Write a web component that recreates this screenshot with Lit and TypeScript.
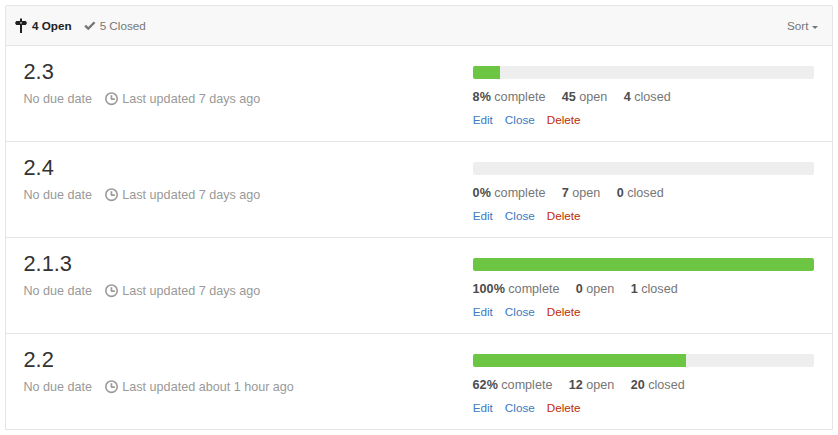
import { LitElement, html, css, svg } from "lit";
import { customElement } from "lit/decorators.js";

interface Milestone { title: string; updated: string; percent: number; open: number; closed: number }

const milestones: Milestone[] = [
  { title: "2.3", updated: "7 days ago", percent: 8, open: 45, closed: 4 },
  { title: "2.4", updated: "7 days ago", percent: 0, open: 7, closed: 0 },
  { title: "2.1.3", updated: "7 days ago", percent: 100, open: 0, closed: 1 },
  { title: "2.2", updated: "about 1 hour ago", percent: 62, open: 12, closed: 20 },
];

const BAR_WIDTH = 341;
const filled = (m: Milestone) => Math.floor((BAR_WIDTH * m.closed) / (m.open + m.closed));

const icon = (name: string, width: number, d: string) => html`<svg class="icon ${name}" width=${width} height="16" viewBox="0 0 ${width} 16" aria-hidden="true">${svg`<path fill-rule="evenodd" d=${d}></path>`}</svg>`;
const SIGN = "M5 .4h2V3h3.8L12 5l-1.2 2H7v8H5V7H1.2L0 5l1.2-2H5zM5.2 4.3v1.3h1.6V4.3z";
const CHECK = "M9.7 3.4L4.3 9 2 6.8.3 8.5l4 3.8 7.1-7.2z";
const CLOCK = "M6.5 1.2a6.5 6.5 0 1 0 0 13 6.5 6.5 0 0 0 0-13zm0 1.6a4.9 4.9 0 1 1 0 9.8 4.9 4.9 0 0 1 0-9.8zM5.6 4.2h1.7v3h2.5v1.7H6.4l-.8-.8z";

@customElement("app-root")
export class AppRoot extends LitElement {
  static styles = css`
    :host { display: block; box-sizing: border-box; height: 435px; padding: 5px; background: #fff; font: 12.6px/20px "Liberation Sans", Arial, sans-serif; color: #767676; }
    * { box-sizing: border-box; }
    .list { width: 828px; border: 1px solid #e5e5e5; border-radius: 2px 2px 0 0; }
    .header { height: 39px; background: #f8f8f8; display: flex; align-items: center; padding: 1px 14px 0 9px; font-size: 11.7px; }
    .icon { fill: currentColor; display: block; flex: none; }
    .tab { display: flex; align-items: center; }
    .active { color: #222; font-weight: bold; margin-right: 12px; }
    .sign { margin-right: 5px; }
    .check { margin-right: 4px; }
    .sort { margin-left: auto; display: flex; align-items: center; }
    .caret { border: 3px solid transparent; border-top-color: currentColor; border-bottom: 0; margin: 2px 0 0 3.5px; }
    .row { height: 96px; border-top: 1px solid #e5e5e5; display: grid; grid-template-columns: 449.5px 341px; padding-left: 17.5px; }
    h2 { margin: 13px 0 0; font-size: 21.8px; line-height: 26px; font-weight: normal; color: #333; }
    .meta { display: flex; margin-top: 4px; color: #999; }
    .due { margin-right: 13px; }
    .updated { display: flex; align-items: center; }
    .clock { margin-right: 4.2px; }
    .bar { margin-top: 20px; height: 13px; border-radius: 2px; background: #eee; overflow: hidden; }
    .fill { height: 100%; background: #6cc644; }
    .stats { display: flex; gap: 16.4px; margin-top: 8px; margin-left: -0.4px; }
    .stats b { color: #4c4c4c; }
    .actions { display: flex; gap: 12px; font-size: 11.7px; margin-top: 3px; margin-left: -0.3px; color: #4078c0; }
    .delete { color: #bd2c00; }
  `;
  render() {
    return html`<section class="list">
      <header class="header">
        <span class="tab active">${icon("sign", 12, SIGN)}<span>4 Open</span></span>
        <span class="tab">${icon("check", 12, CHECK)}<span>5 Closed</span></span>
        <span class="sort">Sort<i class="caret"></i></span>
      </header>
      ${milestones.map((m) => html`<article class="row">
        <div><h2>${m.title}</h2>
          <div class="meta"><span class="due">No due date</span><span class="updated">${icon("clock", 13, CLOCK)}<span>Last updated ${m.updated}</span></span></div>
        </div>
        <div>
          <div class="bar"><div class="fill" style="width:${filled(m)}px"></div></div>
          <div class="stats"><span><b>${m.percent}%</b> complete</span><span><b>${m.open}</b> open</span><span><b>${m.closed}</b> closed</span></div>
          <div class="actions"><span>Edit</span><span>Close</span><span class="delete">Delete</span></div>
        </div>
      </article>`)}
    </section>`;
  }
}
